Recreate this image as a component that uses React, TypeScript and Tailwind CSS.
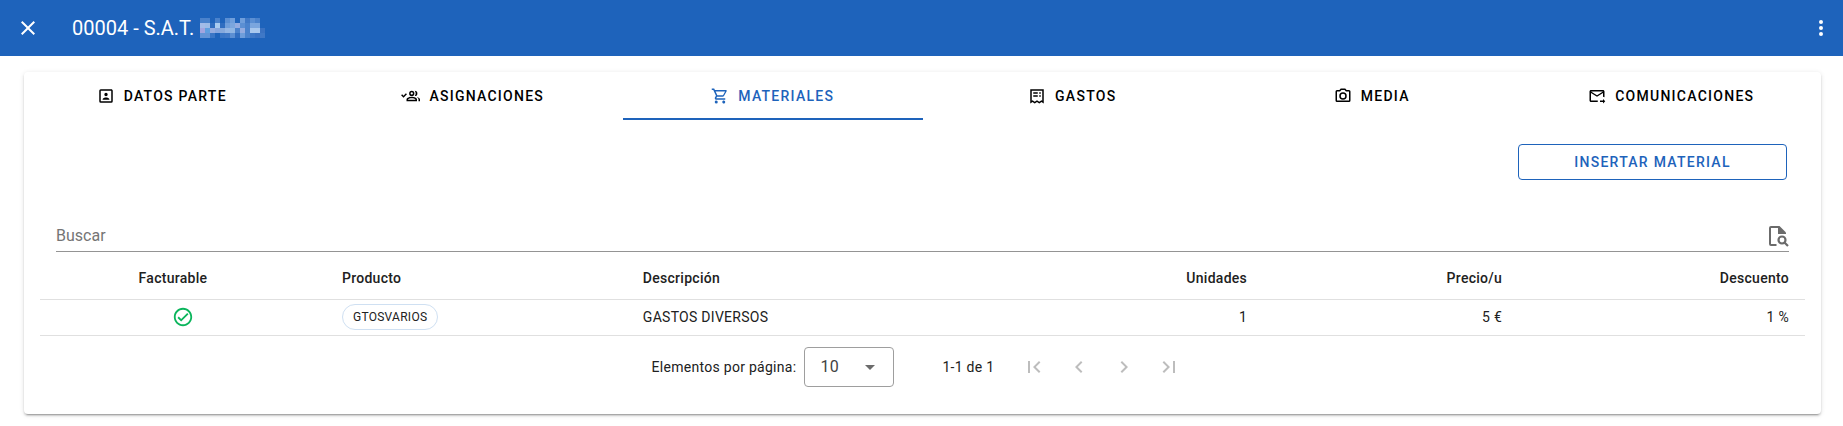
import React from "react";

const paths = {
  close:
    "M19,6.41L17.59,5L12,10.59L6.41,5L5,6.41L10.59,12L5,17.59L6.41,19L12,13.41L17.59,19L19,17.59L13.41,12L19,6.41Z",
  dots:
    "M12,16A2,2 0 0,1 14,18A2,2 0 0,1 12,20A2,2 0 0,1 10,18A2,2 0 0,1 12,16M12,10A2,2 0 0,1 14,12A2,2 0 0,1 12,14A2,2 0 0,1 10,12A2,2 0 0,1 12,10M12,4A2,2 0 0,1 14,6A2,2 0 0,1 12,8A2,2 0 0,1 10,6A2,2 0 0,1 12,4Z",
  accountBox:
    "M19,19H5V5H19M19,3H5A2,2 0 0,0 3,5V19A2,2 0 0,0 5,21H19A2,2 0 0,0 21,19V5C21,3.89 20.1,3 19,3M16.5,16.25C16.5,14.75 13.5,14 12,14C10.5,14 7.5,14.75 7.5,16.25V17H16.5M12,12.25A2.25,2.25 0 0,0 14.25,10A2.25,2.25 0 0,0 12,7.75A2.25,2.25 0 0,0 9.75,10A2.25,2.25 0 0,0 12,12.25Z",
  accountsCheck:
    "M13 5A3.5 3.5 0 0 0 9.5 8.5A3.5 3.5 0 0 0 13 12A3.5 3.5 0 0 0 16.5 8.5A3.5 3.5 0 0 0 13 5M13 7A1.5 1.5 0 0 1 14.5 8.5A1.5 1.5 0 0 1 13 10A1.5 1.5 0 0 1 11.5 8.5A1.5 1.5 0 0 1 13 7M17 5C17.8 6.1 18.2 7.2 18.2 8.5C18.2 9.8 17.8 10.9 17 12A3.5 3.5 0 0 0 20.5 8.5A3.5 3.5 0 0 0 17 5M5.2 8.3L6.6 9.7L2 14.3L-1.2 11.1L0.2 9.7L2 11.5L5.2 8.3M13 13C10.67 13 6 14.17 6 16.5V19H20V16.5C20 14.17 15.33 13 13 13M19.5 13.2C21 13.9 22 15 22 16.5V19H24V16.5C24 14.8 21.8 13.7 19.5 13.2M13 15C14.9 15 17.4 15.8 18 16.5V17H8V16.5C8.6 15.8 11.1 15 13 15Z",
  cart:
    "M17,18A2,2 0 0,1 19,20A2,2 0 0,1 17,22C15.89,22 15,21.1 15,20C15,18.89 15.89,18 17,18M1,2H4.27L5.21,4H20A1,1 0 0,1 21,5C21,5.17 20.95,5.34 20.88,5.5L17.3,11.97C16.96,12.58 16.3,13 15.55,13H8.1L7.2,14.63L7.17,14.75A0.25,0.25 0 0,0 7.42,15H19V17H7C5.89,17 5,16.1 5,15C5,14.65 5.09,14.32 5.24,14.04L6.6,11.59L3,4H1V2M7,18A2,2 0 0,1 9,20A2,2 0 0,1 7,22C5.89,22 5,21.1 5,20C5,18.89 5.89,18 7,18M16,11L18.78,6H6.14L8.5,11H16Z",
  receipt:
    "M3 22V3H21V22L18 20L15 22L12 20L9 22L6 20L3 22M17 9V7H15V9H17M13 9V7H7V9H13M13 11H7V13H13V11M15 13H17V11H15V13M19 18.3V5H5V18.3L6 17.6L9 19.6L12 17.6L15 19.6L18 17.6L19 18.3Z",
  camera:
    "M20,4H16.83L15,2H9L7.17,4H4A2,2 0 0,0 2,6V18A2,2 0 0,0 4,20H20A2,2 0 0,0 22,18V6A2,2 0 0,0 20,4M20,18H4V6H8.05L9.88,4H14.12L15.95,6H20V18M12,7A5,5 0 0,0 7,12A5,5 0 0,0 12,17A5,5 0 0,0 17,12A5,5 0 0,0 12,7M12,15A3,3 0 0,1 9,12A3,3 0 0,1 12,9A3,3 0 0,1 15,12A3,3 0 0,1 12,15Z",
  mailArrow:
    "M13 19C13 18.66 13.04 18.33 13.09 18H4V8L12 13L20 8V13.09C20.72 13.21 21.39 13.46 22 13.81V6C22 4.9 21.1 4 20 4H4C2.9 4 2 4.9 2 6V18C2 19.1 2.9 20 4 20H13.09C13.04 19.67 13 19.34 13 19M20 6L12 11L4 6H20M20 22V20H16V18H20V16L23 19L20 22Z",
  checkCircle:
    "M12 2C6.5 2 2 6.5 2 12S6.5 22 12 22 22 17.5 22 12 17.5 2 12 2M12 20C7.59 20 4 16.41 4 12S7.59 4 12 4 20 7.59 20 12 16.41 20 12 20M16.59 7.58L10 14.17L7.41 11.59L6 13L10 17L18 9L16.59 7.58Z",
  first:
    "M18.41,16.59L13.82,12L18.41,7.41L17,6L11,12L17,18L18.41,16.59M6,6H8V18H6V6Z",
  prev: "M15.41,16.58L10.83,12L15.41,7.41L14,6L8,12L14,18L15.41,16.58Z",
  next: "M8.59,16.58L13.17,12L8.59,7.41L10,6L16,12L10,18L8.59,16.58Z",
  last: "M5.59,7.41L10.18,12L5.59,16.59L7,18L13,12L7,6L5.59,7.41M16,6H18V18H16V6Z",
  menuDown: "M7,10L12,15L17,10H7Z",
};

function Icon({ name, className }: { name: keyof typeof paths; className: string }) {
  return (
    <svg viewBox="0 0 24 24" fill="currentColor" aria-hidden="true" className={"overflow-visible " + className}>
      <path fillRule="evenodd" d={paths[name]} />
    </svg>
  );
}

function FileSearchIcon() {
  return (
    <svg viewBox="0 0 24 24" aria-hidden="true" className="size-6 text-[#6b6b6b]">
      <path
        fill="none"
        stroke="currentColor"
        strokeWidth="2"
        d="M11.5 21H6Q5 21 5 20V4Q5 3 6 3H14"
      />
      <path fill="currentColor" d="M13 2H14.5L21 8.5V10H13Z" />
      <circle cx="17" cy="16" r="3.5" fill="none" stroke="currentColor" strokeWidth="2.2" />
      <path fill="none" stroke="currentColor" strokeWidth="2.2" d="M19.5 18.5L23 22" />
    </svg>
  );
}

const mosaic = [
  ["#4a82cc", "#4a82cc", "", "#4a82cc", "", "#5b8fd3", "#6f9edb", "", "#6f9edb", "#3f78c6", "#5b8fd3", "#4a82cc", ""],
  ["#a3bbe8", "#9dbbe6", "#2f6dc0", "#a9cbf0", "#2f6dc0", "#6f9edb", "#7ba6de", "#94ace0", "#5b8fd3", "#4a82cc", "#7ba6de", "#7ba6de", ""],
  ["#a3a5df", "#5f9fe0", "#94ace0", "#86a6de", "#86a9dc", "#94b6e4", "#8fb6e4", "#4a82cc", "#94ace0", "#4a82cc", "#a9c8ee", "#a9c8ee", "#3a72c2"],
  ["#6394d6", "#6394d6", "#3a76c6", "", "#3a76c6", "#3f78c6", "#5b8fd3", "#2f6dc0", "#6f9edb", "#4a82cc", "#3f78c6", "#3a72c2", "#3f78c6"],
];

function RedactedName() {
  return (
    <svg viewBox="0 0 65 20" className="h-5 w-[65px]" aria-hidden="true" shapeRendering="crispEdges">
      {mosaic.map((row, y) =>
        row.map((fill, x) =>
          fill ? <rect key={`${x}-${y}`} x={x * 5} y={y * 5} width="5" height="5" fill={fill} /> : null,
        ),
      )}
    </svg>
  );
}

const tabs: { label: string; icon: keyof typeof paths; active?: boolean }[] = [
  { label: "DATOS PARTE", icon: "accountBox" },
  { label: "ASIGNACIONES", icon: "accountsCheck" },
  { label: "MATERIALES", icon: "cart", active: true },
  { label: "GASTOS", icon: "receipt" },
  { label: "MEDIA", icon: "camera" },
  { label: "COMUNICACIONES", icon: "mailArrow" },
];

const pagers: { label: string; icon: keyof typeof paths }[] = [
  { label: "Primera página", icon: "first" },
  { label: "Página anterior", icon: "prev" },
  { label: "Página siguiente", icon: "next" },
  { label: "Última página", icon: "last" },
];

export default function App() {
  return (
    <div className="bg-white font-[Roboto,sans-serif] text-sm tracking-[0.02em] text-[#212121]">
      <header className="flex h-14 items-center bg-[#1e63bb] px-4 text-white">
        <button type="button" aria-label="Cerrar">
          <Icon name="close" className="size-6" />
        </button>
        <h1 className="ml-8 flex items-center gap-1.5 text-xl tracking-normal">
          00004 - S.A.T.
          <RedactedName />
        </h1>
        <button type="button" aria-label="Más opciones" className="-mr-1.5 ml-auto">
          <Icon name="dots" className="size-6" />
        </button>
      </header>

      <main className="pt-4 pr-[22px] pb-2 pl-6">
        <section className="rounded-sm pb-[27px] shadow-[0_3px_1px_-2px_rgba(0,0,0,0.2),0_2px_2px_0_rgba(0,0,0,0.14),0_1px_5px_0_rgba(0,0,0,0.12)]">
          <div role="tablist" className="grid grid-cols-6">
            {tabs.map((tab) => (
              <button
                key={tab.label}
                type="button"
                role="tab"
                aria-selected={!!tab.active}
                className={
                  "flex h-12 items-center justify-center gap-[9px] border-y-2 border-t-transparent font-medium tracking-[0.09em] first:pr-6 " +
                  (tab.active ? "border-b-[#1e63bb] text-[#1e63bb]" : "border-b-transparent text-black")
                }
              >
                <Icon name={tab.icon} className="size-[18px]" />
                {tab.label}
              </button>
            ))}
          </div>

          <div className="flex justify-end pt-6 pr-[34px]">
            <button
              type="button"
              className="h-9 w-[269px] rounded-sm border border-[#1e63bb] font-medium tracking-[0.09em] text-[#1e63bb]"
            >
              INSERTAR MATERIAL
            </button>
          </div>

          <div className="mx-8 mt-10 flex h-8 items-center border-b border-[#949494]">
            <input
              type="text"
              aria-label="Buscar"
              placeholder="Buscar"
              className="min-w-0 flex-1 text-base tracking-normal outline-none placeholder:text-[#757575]"
            />
            <FileSearchIcon />
          </div>

          <div className="px-4">
            <table className="w-full table-fixed border-collapse">
              <colgroup>
                <col className="w-[16.2%]" />
                <col className="w-[17.05%]" />
                <col className="w-[22%]" />
                <col className="w-[14.05%]" />
                <col className="w-[14.45%]" />
                <col className="w-[16.25%]" />
              </colgroup>
              <thead>
                <tr className="h-[47px] border-b border-[#e0e0e0] text-left [&>th]:px-4 [&>th]:pt-1.5 [&>th]:font-medium">
                  <th className="text-center">
                    <span className="pr-5">Facturable</span>
                  </th>
                  <th>Producto</th>
                  <th>Descripción</th>
                  <th className="text-right">Unidades</th>
                  <th className="text-right">Precio/u</th>
                  <th className="text-right">Descuento</th>
                </tr>
              </thead>
              <tbody>
                <tr className="h-9 border-b border-[#e0e0e0] [&>td]:px-4">
                  <td>
                    <Icon name="checkCircle" className="mx-auto size-[22px] text-[#0bb55c]" />
                  </td>
                  <td>
                    <span className="inline-flex h-[26px] items-center rounded-full border border-[#cfe0f2] px-2.5 align-middle text-xs">
                      GTOSVARIOS
                    </span>
                  </td>
                  <td>GASTOS DIVERSOS</td>
                  <td className="text-right">1</td>
                  <td className="text-right">5 €</td>
                  <td className="text-right">1 %</td>
                </tr>
              </tbody>
            </table>
          </div>

          <div className="flex items-center justify-center pt-[11px] pr-3">
            <label htmlFor="page-size">Elementos por página:</label>
            <div className="ml-2 grid h-10 w-[90px] items-center rounded-sm border border-[#9e9e9e]">
              <select
                id="page-size"
                defaultValue="10"
                className="col-start-1 row-start-1 h-full w-full appearance-none bg-transparent pl-[15px] text-base text-[#424242] outline-none"
              >
                <option>10</option>
                <option>25</option>
                <option>50</option>
              </select>
              <Icon
                name="menuDown"
                className="pointer-events-none col-start-1 row-start-1 mr-[11px] size-6 justify-self-end text-[#6b6b6b]"
              />
            </div>
            <span className="ml-12">1-1 de 1</span>
            <div className="ml-7 flex gap-[21px]">
              {pagers.map((pager) => (
                <button key={pager.icon} type="button" disabled aria-label={pager.label} className="text-[#bdbdbd]">
                  <Icon name={pager.icon} className="size-6" />
                </button>
              ))}
            </div>
          </div>
        </section>
      </main>
    </div>
  );
}
